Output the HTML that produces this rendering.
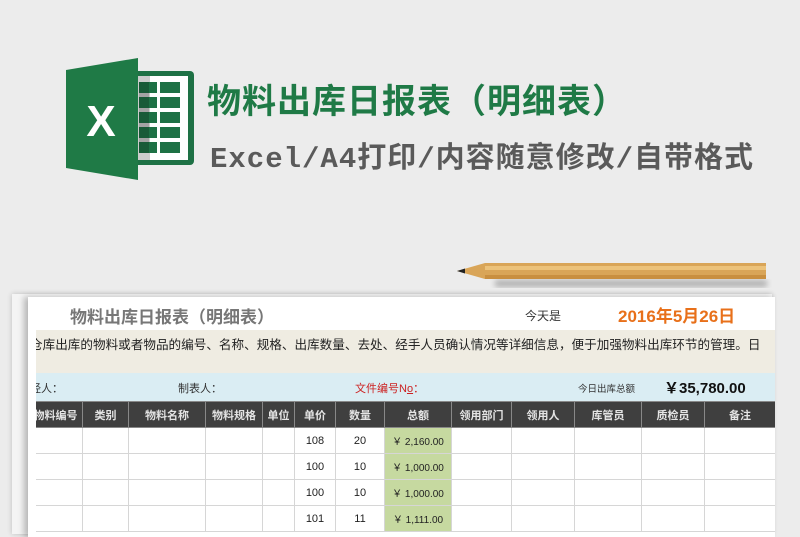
<!DOCTYPE html>
<html><head><meta charset="utf-8"><style>
*{margin:0;padding:0;box-sizing:border-box}
body{width:800px;height:526px;background:#ececec;position:relative;overflow:hidden;font-family:"Liberation Sans","Noto Sans CJK SC",sans-serif}
.a{position:absolute;white-space:nowrap}
.t1{left:207px;top:74px;font-size:34px;font-weight:bold;color:#1f7a46;letter-spacing:1px}
.t2{left:210px;top:134px;font-size:29px;color:#5a5a5a;letter-spacing:1px;font-family:"Liberation Mono","Noto Sans CJK SC",monospace;font-weight:bold}
.sheet{position:absolute;left:28px;top:297px;width:747px;height:240px;background:#fff;box-shadow:-4px 0 6px rgba(0,0,0,.25)}
.clip{position:absolute;left:8px;top:0;width:739px;height:240px;overflow:hidden}
.back{position:absolute;left:12px;top:294px;width:760px;height:240px;background:#f4f4f4;box-shadow:0 0 5px rgba(0,0,0,.2)}
table{position:absolute;left:-8px;top:104px;border-collapse:collapse;font-size:11px;width:747px;table-layout:fixed}
td{border:1px solid #d6d6d6;height:26px;text-align:center;color:#222}
th{background:#3f3f3f;color:#e4e4e4;font-weight:bold;height:26px;border:1px solid #888;font-size:11px;white-space:nowrap;overflow:hidden}
.g{background:#c6d9a0;font-size:10px}
</style></head><body>
<svg class="a" style="left:64px;top:58px" width="132" height="122" viewBox="0 0 132 122">
<rect x="70" y="13" width="60" height="94" rx="4" fill="#1e7145"/>
<rect x="74" y="18" width="50" height="84" fill="#fff"/>
<rect x="74" y="18" width="12" height="84" fill="#ccc"/>
<g fill="#1e7145">
<rect x="75" y="24" width="18" height="11"/><rect x="96" y="24" width="20" height="11"/>
<rect x="75" y="39" width="18" height="11"/><rect x="96" y="39" width="20" height="11"/>
<rect x="75" y="54" width="18" height="11"/><rect x="96" y="54" width="20" height="11"/>
<rect x="75" y="69" width="18" height="11"/><rect x="96" y="69" width="20" height="11"/>
<rect x="75" y="84" width="18" height="11"/><rect x="96" y="84" width="20" height="11"/>
</g>
<rect x="75" y="24" width="10" height="71" fill="#000" opacity=".2"/>
<path d="M2 12 L74 0 L74 122 L2 110 Z" fill="#1f7a46"/>
<text x="37" y="78" font-size="44" font-weight="bold" fill="#fff" text-anchor="middle" font-family="Liberation Sans">X</text>
</svg>
<div class="a t1">物料出库日报表（明细表）</div>
<div class="a t2">Excel/A4打印/内容随意修改/自带格式</div>
<svg class="a" style="left:455px;top:258px" width="320" height="36">
<defs><filter id="b"><feGaussianBlur stdDeviation="3"/></filter></defs>
<rect x="40" y="22" width="272" height="7" fill="#000" opacity=".25" filter="url(#b)"/>
<path d="M2 13 L30 5 L311 5 L311 21 L30 21 Z" fill="#d9a558"/>
<path d="M30 8 L311 8 L311 12 L30 12Z" fill="#ecc27a"/>
<path d="M30 17 L311 17 L311 21 L30 21Z" fill="#c98f40"/>
<path d="M2 13 L10 10.5 L10 15.5 Z" fill="#222"/>
</svg>
<div class="back"></div>
<div class="sheet">
<div class="clip">
<div class="a" style="left:34px;top:6px;font-size:17px;font-weight:bold;color:#777">物料出库日报表（明细表）</div>
<div class="a" style="left:489px;top:10px;font-size:12px;color:#333">今天是</div>
<div class="a" style="left:582px;top:5px;font-size:17px;font-weight:bold;color:#e8701a">2016年5月26日</div>
<div class="a" style="left:0;top:33px;width:747px;height:43px;background:#efece2"></div>
<div class="a" style="left:-6px;top:37px;font-size:12.6px;color:#222">仓库出库的物料或者物品的编号、名称、规格、出库数量、去处、经手人员确认情况等详细信息，便于加强物料出库环节的管理。日</div>
<div class="a" style="left:-4px;top:58px;font-size:11px;color:#222">，</div>
<div class="a" style="left:0;top:76px;width:747px;height:28px;background:#daedf3"></div>
<div class="a" style="left:-6px;top:83px;font-size:11px;color:#333">经人：</div>
<div class="a" style="left:142px;top:83px;font-size:11px;color:#333">制表人：</div>
<div class="a" style="left:319px;top:83px;font-size:11px;color:#c22">文件编号N<u>o</u>：</div>
<div class="a" style="left:542px;top:84px;font-size:9.5px;color:#333">今日出库总额</div>
<div class="a" style="left:628px;top:80px;font-size:15px;font-weight:bold;color:#111">￥35,780.00</div>
<table>
<colgroup><col style="width:54px"><col style="width:46px"><col style="width:77px"><col style="width:57px"><col style="width:32px"><col style="width:41px"><col style="width:49px"><col style="width:67px"><col style="width:60px"><col style="width:63px"><col style="width:67px"><col style="width:63px"><col style="width:71px"></colgroup>
<tr><th>物料编号</th><th>类别</th><th>物料名称</th><th>物料规格</th><th>单位</th><th>单价</th><th>数量</th><th>总额</th><th>领用部门</th><th>领用人</th><th>库管员</th><th>质检员</th><th>备注</th></tr>
<tr><td></td><td></td><td></td><td></td><td></td><td>108</td><td>20</td><td class="g">￥ 2,160.00</td><td></td><td></td><td></td><td></td><td></td></tr>
<tr><td></td><td></td><td></td><td></td><td></td><td>100</td><td>10</td><td class="g">￥ 1,000.00</td><td></td><td></td><td></td><td></td><td></td></tr>
<tr><td></td><td></td><td></td><td></td><td></td><td>100</td><td>10</td><td class="g">￥ 1,000.00</td><td></td><td></td><td></td><td></td><td></td></tr>
<tr><td></td><td></td><td></td><td></td><td></td><td>101</td><td>11</td><td class="g">￥ 1,111.00</td><td></td><td></td><td></td><td></td><td></td></tr>
</table>
</div>
</div>
</body></html>
